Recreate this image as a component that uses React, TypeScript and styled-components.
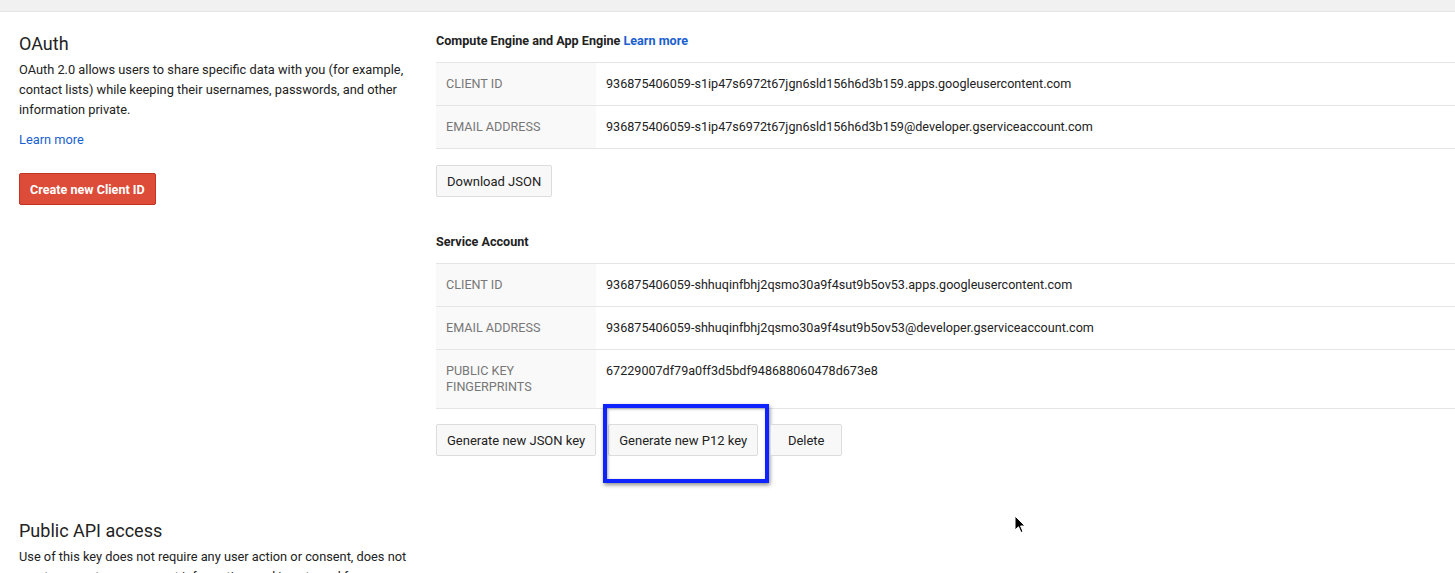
import React from "react";
import styled, { createGlobalStyle } from "styled-components";

const Global = createGlobalStyle`
  html, body { margin: 0; padding: 0; background: #fff; }
  body { font-family: Roboto, "Liberation Sans", Arial, sans-serif; color: #222; font-size: 13px; }
  * { box-sizing: border-box; }
`;

const Page = styled.div`
  position: relative;
  width: 1455px;
  height: 573px;
  overflow: hidden;
`;

const TopBar = styled.div`
  height: 12px;
  background: #f1f1f1;
  border-bottom: 1px solid #e5e5e5;
`;

const Section = styled.section<{ $top: number }>`
  display: grid;
  grid-template-columns: 417px 1fr;
  padding-left: 19px;
  padding-top: ${(p) => p.$top}px;
`;

const Left = styled.div`
  display: flex;
  flex-direction: column;
  align-items: flex-start;
`;

const Right = styled.div`
  display: flex;
  flex-direction: column;
  align-items: stretch;
`;

const H2 = styled.h2`
  margin: 0;
  font-size: 18px;
  font-weight: 400;
  line-height: 24px;
  color: #222;
`;

const P = styled.p`
  margin: 4px 0 0;
  font-size: 12.8px;
  line-height: 20px;
  width: 400px;
`;

const Link = styled.a`
  color: #1a5fd0;
  text-decoration: none;
  cursor: pointer;
`;

const LearnMore = styled(Link)`
  margin-top: 10px;
  font-size: 12.8px;
  line-height: 20px;
`;

const RedButton = styled.button`
  margin-top: 23px;
  height: 32px;
  padding: 0 10px;
  background: #dd4b39;
  border: 1px solid #c23321;
  border-radius: 2px;
  color: #fff;
  font-family: inherit;
  font-size: 12.6px;
  font-weight: 700;
`;

const H3 = styled.h3<{ $mt?: number }>`
  margin: ${(p) => p.$mt ?? 0}px 0 0;
  font-size: 12.6px;
  font-weight: 700;
  line-height: 18px;
  color: #222;
`;

const Table = styled.div`
  margin-top: 12px;
  border-top: 1px solid #e5e5e5;
`;

const Row = styled.div`
  display: grid;
  grid-template-columns: 160px 1fr;
  border-bottom: 1px solid #e5e5e5;
`;

const Label = styled.div`
  background: #f9f9f9;
  padding: 13px 10px;
  line-height: 16px;
  font-size: 12.6px;
  color: #777;
  text-transform: uppercase;
`;

const Value = styled.div`
  padding: 13px 10px;
  line-height: 16px;
  font-size: 12.6px;
  color: #222;
`;

const Buttons = styled.div<{ $mt: number }>`
  display: flex;
  gap: 12px;
  margin-top: ${(p) => p.$mt}px;
`;

const Button = styled.button`
  position: relative;
  height: 32px;
  padding: 0 10px;
  background: #f8f8f8;
  border: 1px solid #dcdcdc;
  border-radius: 2px;
  color: #222;
  font-family: inherit;
  font-size: 13px;
  min-width: 72px;
`;

const Highlight = styled.div`
  position: absolute;
  left: -6px;
  top: -21px;
  width: 166px;
  height: 79px;
  border: 4px solid #0f23ff;
  box-shadow: 1px 2px 4px rgba(0, 0, 0, 0.45), inset 1px 1px 3px rgba(0, 0, 0, 0.35);
  pointer-events: none;
`;

const Cursor = styled.svg`
  position: absolute;
  left: 1014px;
  top: 515px;
`;

const Spacer = styled.div`
  height: 1px;
`;

export default function App() {
  return (
    <Page>
      <Global />
      <TopBar />
      <Section $top={20}>
        <Left>
          <H2>OAuth</H2>
          <P>
            OAuth 2.0 allows users to share specific data with you (for example,
            contact lists) while keeping their usernames, passwords, and other
            information private.
          </P>
          <LearnMore>Learn more</LearnMore>
          <RedButton>Create new Client ID</RedButton>
        </Left>
        <Right>
          <H3>
            Compute Engine and App Engine <Link>Learn more</Link>
          </H3>
          <Table>
            <Row>
              <Label>Client ID</Label>
              <Value>936875406059-s1ip47s6972t67jgn6sld156h6d3b159.apps.googleusercontent.com</Value>
            </Row>
            <Row>
              <Label>Email address</Label>
              <Value>936875406059-s1ip47s6972t67jgn6sld156h6d3b159@developer.gserviceaccount.com</Value>
            </Row>
          </Table>
          <Buttons $mt={16}>
            <Button>Download JSON</Button>
          </Buttons>
          <H3 $mt={36}>Service Account</H3>
          <Table>
            <Row>
              <Label>Client ID</Label>
              <Value>936875406059-shhuqinfbhj2qsmo30a9f4sut9b5ov53.apps.googleusercontent.com</Value>
            </Row>
            <Row>
              <Label>Email address</Label>
              <Value>936875406059-shhuqinfbhj2qsmo30a9f4sut9b5ov53@developer.gserviceaccount.com</Value>
            </Row>
            <Row>
              <Label>
                Public key
                <br />
                fingerprints
              </Label>
              <Value>67229007df79a0ff3d5bdf948688060478d673e8</Value>
            </Row>
          </Table>
          <Buttons $mt={15}>
            <Button>Generate new JSON key</Button>
            <Button>
              Generate new P12 key
              <Highlight />
            </Button>
            <Button>Delete</Button>
          </Buttons>
        </Right>
      </Section>
      <Section $top={63}>
        <Left>
          <H2>Public API access</H2>
          <P>
            Use of this key does not require any user action or consent, does not
            grant access to any account information, and is not used for authorization.
          </P>
        </Left>
        <Spacer />
      </Section>
      <Cursor width="14" height="20" viewBox="0 0 14 20">
        <path
          d="M1 1 L1 15 L4.5 11.8 L7 17.5 L9 16.6 L6.6 11 L11 11 Z"
          fill="#000"
          stroke="#fff"
          strokeWidth="1"
          strokeLinejoin="round"
        />
      </Cursor>
    </Page>
  );
}
